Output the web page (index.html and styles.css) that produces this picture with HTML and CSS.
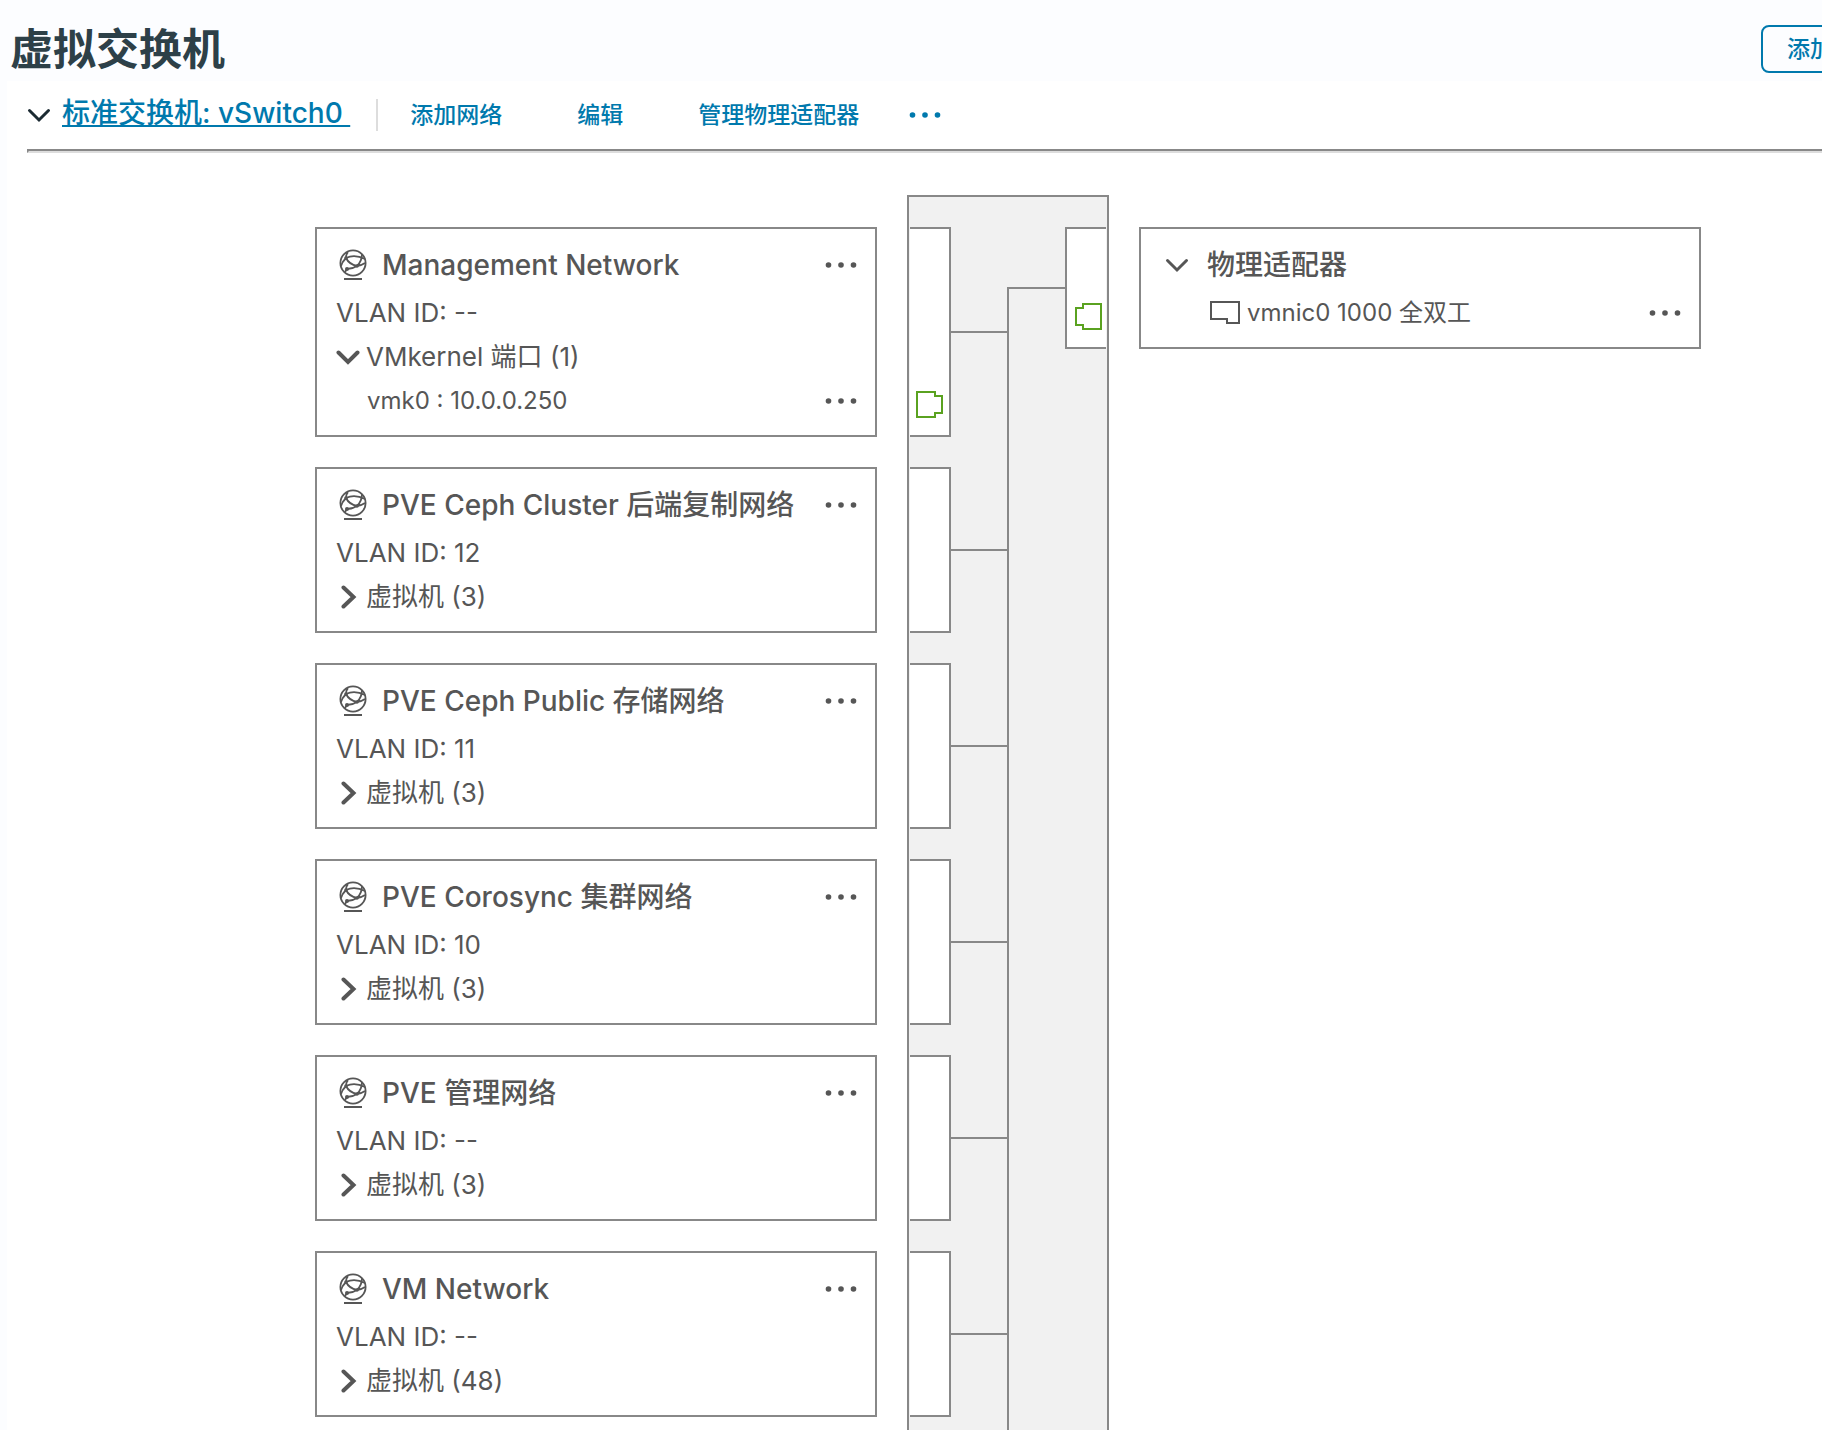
FILE: index.html
```html
<!DOCTYPE html>
<html lang="zh-CN">
<head>
    <meta charset="UTF-8">
    <meta name="viewport" content="width=device-width, initial-scale=1.0">
    <title>虚拟交换机</title>
    <link rel="stylesheet" href="styles.css">
</head>
<body>
    <svg width="0" height="0" class="sprite" aria-hidden="true">
        <symbol id="icon-network" viewBox="0 0 28 32">
            <g fill="none" stroke="currentColor" stroke-width="1.8">
                <circle cx="14" cy="14" r="12.6"/>
                <path d="M7 9c6-3 13-2 19 1M7 9c2 4 6 7 11 8M18 17c3-3 5-7 5-12M18 17c-3 2-6 3-10 3M18 17c3 0 5-1 8-3M7 9c-2 2-4 4-5 8M7 9c0-2 0-4 2-6M8 20l-2 3"/>
                <path d="M5 30h18" stroke-width="2"/>
            </g>
            <circle cx="7" cy="9" r="1.8" fill="currentColor"/>
            <circle cx="18" cy="17" r="1.8" fill="currentColor"/>
            <circle cx="8" cy="20" r="2" fill="currentColor"/>
        </symbol>
        <symbol id="icon-down" viewBox="0 0 24 24">
            <path d="M2.500 7.500l9.500 9.500L21.500 7.500" fill="none" stroke="currentColor" stroke-linecap="round"/>
        </symbol>
        <symbol id="icon-right" viewBox="0 0 24 24">
            <path d="M7.500 2.500l10 9.500-10 9.500" fill="none" stroke="currentColor" stroke-linecap="round"/>
        </symbol>
        <symbol id="icon-dots" viewBox="0 0 32 24">
            <g fill="currentColor"><circle cx="3.500" cy="12" r="2.800"/><circle cx="16" cy="12" r="2.800"/><circle cx="28.500" cy="12" r="2.800"/></g>
        </symbol>
        <symbol id="icon-port" viewBox="0 0 28 28">
            <path d="M2 2h18v4h7v17h-7v4H2z" fill="none" stroke="currentColor" stroke-width="2"/>
        </symbol>
        <symbol id="icon-nic" viewBox="0 0 32 24">
            <path d="M2 1h28v21H18v-4H2z" fill="none" stroke="currentColor" stroke-width="2"/>
        </symbol>
    </svg>

    <div class="page">
        <header class="header">
            <h1>虚拟交换机</h1>
            <button type="button" class="btn-outline">添加网络</button>
        </header>

        <main class="content">
            <div class="toolbar">
                <button type="button" class="toggle" aria-label="vSwitch0"><svg class="chevron"><use href="#icon-down"/></svg></button>
                <a class="switch-link" href="#">标准交换机: vSwitch0&nbsp;</a>
                <div class="actions">
                    <button type="button">添加网络</button>
                    <button type="button">编辑</button>
                    <button type="button">管理物理适配器</button>
                    <button type="button" class="more" aria-label="更多"><svg><use href="#icon-dots"/></svg></button>
                </div>
            </div>
            <hr>

            <div class="topology">
                <div class="backplane"></div>
                <div class="bus"></div>

                <div class="networks">
                    <div class="network">
                        <section class="card">
                            <div class="card-title">
                                <svg class="globe"><use href="#icon-network"/></svg>
                                <h2>Management Network</h2>
                                <button type="button" class="more" aria-label="更多"><svg><use href="#icon-dots"/></svg></button>
                            </div>
                            <div class="row">VLAN ID: --</div>
                            <div class="row">
                                <button type="button" class="toggle"><svg class="chevron bold"><use href="#icon-down"/></svg>VMkernel 端口 (1)</button>
                            </div>
                            <div class="row child">
                                <span>vmk0 : 10.0.0.250</span>
                                <button type="button" class="more" aria-label="更多"><svg><use href="#icon-dots"/></svg></button>
                            </div>
                        </section>
                        <div class="link">
                            <div class="port"><svg><use href="#icon-port"/></svg></div>
                        </div>
                    </div>

                    <div class="network">
                        <section class="card">
                            <div class="card-title">
                                <svg class="globe"><use href="#icon-network"/></svg>
                                <h2>PVE Ceph Cluster 后端复制网络</h2>
                                <button type="button" class="more" aria-label="更多"><svg><use href="#icon-dots"/></svg></button>
                            </div>
                            <div class="row">VLAN ID: 12</div>
                            <div class="row">
                                <button type="button" class="toggle"><svg class="chevron bold"><use href="#icon-right"/></svg>虚拟机 (3)</button>
                            </div>
                        </section>
                        <div class="link"><div class="port"></div></div>
                    </div>

                    <div class="network">
                        <section class="card">
                            <div class="card-title">
                                <svg class="globe"><use href="#icon-network"/></svg>
                                <h2>PVE Ceph Public 存储网络</h2>
                                <button type="button" class="more" aria-label="更多"><svg><use href="#icon-dots"/></svg></button>
                            </div>
                            <div class="row">VLAN ID: 11</div>
                            <div class="row">
                                <button type="button" class="toggle"><svg class="chevron bold"><use href="#icon-right"/></svg>虚拟机 (3)</button>
                            </div>
                        </section>
                        <div class="link"><div class="port"></div></div>
                    </div>

                    <div class="network">
                        <section class="card">
                            <div class="card-title">
                                <svg class="globe"><use href="#icon-network"/></svg>
                                <h2>PVE Corosync 集群网络</h2>
                                <button type="button" class="more" aria-label="更多"><svg><use href="#icon-dots"/></svg></button>
                            </div>
                            <div class="row">VLAN ID: 10</div>
                            <div class="row">
                                <button type="button" class="toggle"><svg class="chevron bold"><use href="#icon-right"/></svg>虚拟机 (3)</button>
                            </div>
                        </section>
                        <div class="link"><div class="port"></div></div>
                    </div>

                    <div class="network">
                        <section class="card">
                            <div class="card-title">
                                <svg class="globe"><use href="#icon-network"/></svg>
                                <h2>PVE 管理网络</h2>
                                <button type="button" class="more" aria-label="更多"><svg><use href="#icon-dots"/></svg></button>
                            </div>
                            <div class="row">VLAN ID: --</div>
                            <div class="row">
                                <button type="button" class="toggle"><svg class="chevron bold"><use href="#icon-right"/></svg>虚拟机 (3)</button>
                            </div>
                        </section>
                        <div class="link"><div class="port"></div></div>
                    </div>

                    <div class="network">
                        <section class="card">
                            <div class="card-title">
                                <svg class="globe"><use href="#icon-network"/></svg>
                                <h2>VM Network</h2>
                                <button type="button" class="more" aria-label="更多"><svg><use href="#icon-dots"/></svg></button>
                            </div>
                            <div class="row">VLAN ID: --</div>
                            <div class="row">
                                <button type="button" class="toggle"><svg class="chevron bold"><use href="#icon-right"/></svg>虚拟机 (48)</button>
                            </div>
                        </section>
                        <div class="link"><div class="port"></div></div>
                    </div>
                </div>

                <div class="uplink">
                    <div class="port"><svg><use href="#icon-port"/></svg></div>
                    <section class="card adapters">
                        <div class="card-title">
                            <button type="button" class="toggle" aria-label="物理适配器"><svg class="chevron"><use href="#icon-down"/></svg></button>
                            <h2>物理适配器</h2>
                        </div>
                        <div class="row adapter">
                            <svg class="nic"><use href="#icon-nic"/></svg>
                            <span>vmnic0 1000 全双工</span>
                            <button type="button" class="more" aria-label="更多"><svg><use href="#icon-dots"/></svg></button>
                        </div>
                    </section>
                </div>
            </div>
        </main>
    </div>
</body>
</html>
```
FILE: styles.css
```css
* {
    box-sizing: border-box;
}
body {
    margin: 0;
    height: 100vh;
    overflow: hidden;
    background-color: #fcfdff;
    color: #565656;
    font-family: Inter, "Noto Sans CJK SC", sans-serif;
    font-size: 26px;
    line-height: 40px;
}
h1, h2 {
    margin: 0;
    font-weight: 600;
}
button {
    margin: 0;
    padding: 0;
    border: none;
    background: none;
    color: inherit;
    font: inherit;
    cursor: pointer;
}
svg {
    display: block;
    flex: none;
}
.sprite {
    position: absolute;
}

/* the diagram is wider than the window and runs off the right side */
.page {
    margin-right: -182px;
}
.header {
    display: flex;
    justify-content: space-between;
    align-items: center;
    height: 81px;
    padding: 16px 99px 0 10px;
}
h1 {
    color: #2d4048;
    font-size: 43px;
    line-height: 62px;
}
.btn-outline {
    height: 48px;
    padding: 0 24px;
    border: 2px solid #0079ad;
    border-radius: 8px;
    color: #0079ad;
    font-size: 23px;
    font-weight: 500;
}
.content {
    margin-left: 7px;
    padding: 0 15px 0 20px;
    background-color: #fff;
}
.toolbar {
    display: flex;
    align-items: center;
    height: 68px;
}
.toolbar .toggle {
    color: #1b2a32;
}
.switch-link {
    margin-left: 11px;
    padding-bottom: 4px;
    color: #0079ad;
    font-size: 28px;
    font-weight: 550;
    text-decoration-thickness: 2px;
    text-underline-offset: 2px;
    text-decoration-skip-ink: none;
}
.actions {
    display: flex;
    align-items: center;
    gap: 75px;
    height: 32px;
    margin-left: 26px;
    padding-left: 32px;
    border-left: 2px solid #ddd;
    color: #0079ad;
    font-size: 23px;
    font-weight: 500;
}
.actions .more {
    margin-left: -25px;
}
hr {
    margin: 0;
    border: 2px solid;
    border-color: #888 #ddd #ddd #888;
}

.chevron {
    width: 24px;
    height: 24px;
    stroke-width: 3px;
}
.chevron.bold {
    stroke-width: 4px;
}
.more svg {
    width: 32px;
    height: 24px;
}
.toggle {
    display: flex;
    align-items: center;
    gap: 6px;
}

/* networks | gap | switch left half | switch right half | gap | adapters */
.topology {
    display: grid;
    grid-template-columns: 562px 30px 101px 101px 30px 562px;
    justify-content: center;
    padding: 74px 0 32px;
}
.backplane {
    grid-column: 3 / 5;
    grid-row: 1;
    margin: -32px 0;
    border: 2px solid #888;
    background-color: #f1f1f1;
}
.bus {
    grid-column: 4;
    grid-row: 1;
    width: 2px;
    margin: 60px 0 -32px -1px;
    background-color: #888;
}
.networks {
    grid-column: 1 / 4;
    grid-row: 1;
    display: flex;
    flex-direction: column;
    gap: 30px;
}
.network {
    display: grid;
    grid-template-columns: 562px 101px;
    column-gap: 30px;
}
.card {
    padding: 12px 18px 12px 19px;
    border: 2px solid #888;
    background-color: #fff;
}
.card-title {
    display: flex;
    align-items: center;
    height: 48px;
    margin-bottom: 2px;
}
h2 {
    font-size: 28px;
    font-weight: 550;
}
.globe {
    width: 28px;
    height: 32px;
    margin: 0 15px 0 3px;
}
.row {
    display: flex;
    align-items: center;
    height: 44px;
}
.row.child {
    padding-left: 31px;
    font-size: 24px;
}
.card .more {
    margin-left: auto;
}
.link {
    display: flex;
    align-items: center;
    padding-left: 3px;
}
.link::after, .uplink::before {
    content: "";
    flex: 1;
    height: 2px;
    background-color: #888;
}
.port {
    display: flex;
    align-items: flex-end;
    align-self: stretch;
    width: 41px;
    padding: 0 0 17px 5px;
    border: 2px solid #888;
    border-left: none;
    background-color: #fff;
    color: #5aa220;
}
.port svg {
    width: 28px;
    height: 28px;
}
.uplink {
    grid-column: 4 / 7;
    grid-row: 1;
    align-self: start;
    display: flex;
    align-items: center;
}
.uplink .port {
    margin-right: 33px;
    padding-left: 8px;
    border-left: 2px solid #888;
    border-right: none;
}
.uplink .port svg {
    transform: scaleX(-1);
}
.uplink .card {
    width: 562px;
}
.adapters .toggle {
    margin: 0 18px 0 5px;
}
.adapter {
    padding-left: 49px;
    font-size: 24px;
}
.nic {
    width: 32px;
    height: 24px;
    margin-right: 6px;
}
```
